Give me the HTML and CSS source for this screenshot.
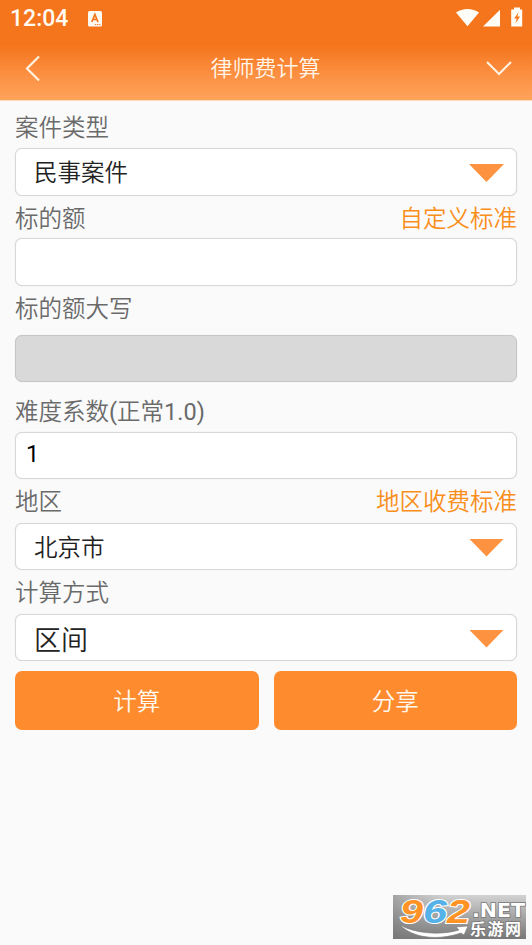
FILE: index.html
```html
<!DOCTYPE html>
<html lang="zh-CN">
<head>
<meta charset="utf-8">
<title>律师费计算</title>
<link rel="stylesheet" href="styles.css">
</head>
<body>
<header class="top">
  <div class="status">
    <span class="clock">12:04</span>
    <svg class="app" width="14" height="16" viewBox="0 0 14 16"><rect width="14" height="15.4" rx="1.5" fill="#fffaf2"/><path d="M3.800 11 6.900 3.500 10 11M5 8.500h3.800" fill="none" stroke="#f5751c" stroke-width="1.700"/><path d="M7 13.500h6" stroke="#f5751c" stroke-width="1" stroke-dasharray="1.2 .9"/></svg>
    <svg class="signals" width="68" height="22" viewBox="0 0 68 22"><path d="M0 4.500C6.500-.3 16.500-.3 23 4.500L11.500 18.300Z" fill="#fffdf8"/><path d="M27 18.500 44 1.800v16.700Z" fill="#fffdf8"/><path d="M58 -.5h6v2h2.200v17H55.200v-17H58Z" fill="#fffdf8"/><path d="M62.600 4 58.200 10.500h2.500l-1.300 5 4.600-7h-2.600Z" fill="#f5751c"/></svg>
  </div>
  <nav class="nav">
    <svg width="16" height="28" viewBox="0 0 16 28"><path d="M15 1.500 3 13.500 15 25.500" fill="none" stroke="#fff1df" stroke-width="2.200"/></svg>
    <h1>律师费计算</h1>
    <svg width="28" height="16" viewBox="0 0 28 16"><path d="M2 1 14 13 26 1" fill="none" stroke="#fff1df" stroke-width="2.200"/></svg>
  </nav>
</header>
<main class="form">
  <div class="label l1"><span>案件类型</span></div>
  <div class="field select"><span>民事案件</span><i class="arrow"></i></div>
  <div class="label l2"><span>标的额</span><a>自定义标准</a></div>
  <div class="field"></div>
  <div class="label l3"><span>标的额大写</span></div>
  <div class="field disabled"></div>
  <div class="label l4"><span>难度系数<b>(</b>正常<b>1.0)</b></span></div>
  <div class="field value"><span>1</span></div>
  <div class="label l5"><span>地区</span><a>地区收费标准</a></div>
  <div class="field select"><span>北京市</span><i class="arrow"></i></div>
  <div class="label l6"><span>计算方式</span></div>
  <div class="field select large"><span>区间</span><i class="arrow"></i></div>
  <div class="actions"><button>计算</button><button>分享</button></div>
</main>
<svg class="mark" width="133" height="44" viewBox="0 0 133 44">
  <defs>
    <linearGradient id="bg" x1="0" y1="0" x2="0" y2="1"><stop offset="0" stop-color="#d2d2d2"/><stop offset="1" stop-color="#777"/></linearGradient>
    <linearGradient id="edge" x1="0" y1="0" x2="1" y2="0"><stop offset="0" stop-color="#777" stop-opacity=".5"/><stop offset=".4" stop-color="#999" stop-opacity="0"/></linearGradient>
  </defs>
  <rect width="133" height="44" fill="url(#bg)"/>
  <rect width="133" height="44" fill="url(#edge)"/>
  <path d="M7 30C21 38 46 41 66 35l-3-3 12-1-4 9-3-2C44 46 20 43 7 30Z" fill="#fff" stroke="#777" stroke-width=".6"/>
  <g class="digits"><text x="7" y="27.500" textLength="23" lengthAdjust="spacingAndGlyphs" fill="#ff9326">9</text><text x="30" y="27.500" textLength="24" lengthAdjust="spacingAndGlyphs" fill="#55b2e8">6</text><text x="54" y="27.500" textLength="23" lengthAdjust="spacingAndGlyphs" fill="#ff9326">2</text></g>
  <text class="net" x="79" y="22" textLength="53" lengthAdjust="spacingAndGlyphs">.NET</text>
  <text class="site" x="77" y="39.500" textLength="51">乐游网</text>
</svg>
</body>
</html>
```
FILE: styles.css
```css
* { box-sizing: border-box; }
body {
  margin: 0;
  height: 945px;
  overflow: hidden;
  background: #fafafa;
  color: #6a6a6a;
  font-family: Roboto, "Noto Sans CJK SC", sans-serif;
  font-size: 23.5px;
  font-weight: 350;
}
.top {
  height: 101px;
  background: linear-gradient(#f5751c 0, #f5751c 45px, #fb8f41 74px, #ffa35b 100px);
  border-bottom: 1px solid #ffdcc0;
}
.status { height: 37px; display: flex; align-items: center; padding: 0 10px; }
.clock { color: #fffaf2; font-size: 23px; font-weight: 500; width: 78px; line-height: 37px; }
.signals { margin: 1px -2px 0 auto; overflow: visible; }
.nav { height: 63px; display: flex; align-items: center; justify-content: space-between; padding: 0 19px 0 24px; }
.nav h1 { margin: 0; font-size: 22px; font-weight: 350; color: #fff5e8; line-height: 32px; transform: translateX(3px); }
.form { padding: 0 15px; }
.label { display: flex; justify-content: space-between; line-height: 34px; }
.label b { font-weight: 400; }
.label a { color: #f98e1b; }
.l1 { height: 47px; padding-top: 10px; }
.l2 { height: 42px; padding-top: 6px; }
.l3 { height: 49px; padding-top: 6px; }
.l4 { height: 50px; padding-top: 13px; }
.l5 { height: 44px; padding-top: 6px; }
.l6 { height: 44px; padding-top: 6px; }
.field {
  height: 47px;
  border: 1.5px solid #d8d8d8;
  border-radius: 7px;
  background: #fff;
  box-shadow: 0 0 1px #d0d0d0;
  display: flex;
  align-items: center;
  justify-content: space-between;
  color: #222;
}
.l2 + .field, .l1 + .field { height: 48px; }
.select { padding: 0 12px 2px 18px; }
.disabled { background: #d9d9d9; border-color: #c6c6c6; }
.value { padding: 0 10px 3px; color: #000; font-weight: 400; }
.large { font-size: 27px; }
.large span { padding-top: 4px; }
.arrow { width: 35px; height: 18px; background: #fd9340; clip-path: polygon(0 0, 100% 0, 50% 100%); margin-top: 4px; }
.actions { display: grid; grid-template-columns: 1fr 1fr; gap: 15px; margin-top: 10px; }
.actions button { height: 59px; border: 0; padding: 0 0 2px; border-radius: 7px; background: #ff8b2f; color: #fff8ee; font: inherit; }
.mark { position: absolute; left: 393px; top: 895px; overflow: visible; }
.digits { font: italic 700 33px "Liberation Sans", sans-serif; stroke: #fff; stroke-width: 2px; paint-order: stroke; }
.net { font: 700 19px "DejaVu Sans", sans-serif; fill: #fff; stroke: #777; stroke-width: 1.5px; paint-order: stroke; }
.site { font: 700 16px "Noto Sans CJK SC", sans-serif; fill: #fff; stroke: #777; stroke-width: 1.5px; paint-order: stroke; }
```
